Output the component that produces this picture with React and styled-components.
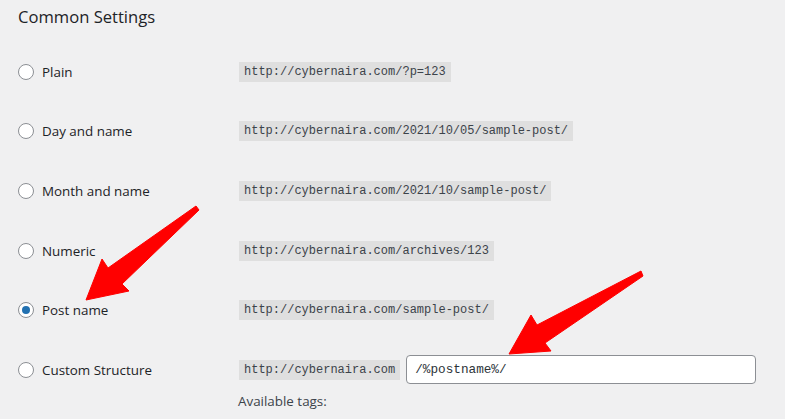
import React from "react"
import styled, { createGlobalStyle } from "styled-components"

const GlobalStyle = createGlobalStyle`
  html, body {
    margin: 0;
    padding: 0;
    background: #f0f0f1;
  }
  body {
    font-family: "Open Sans", "Liberation Sans", sans-serif;
    color: #1d2327;
  }
`

const Page = styled.div`
  position: relative;
  width: 785px;
  height: 419px;
  overflow: hidden;
  padding: 0 18px;
  box-sizing: border-box;
`

const Title = styled.h2`
  margin: 0;
  height: 34px;
  line-height: 34px;
  font-size: 16.6px;
  font-weight: 500;
  color: #1d2327;
`

const List = styled.div`
  margin-top: 8px;
`

const Row = styled.div`
  display: grid;
  grid-template-columns: 221px 1fr;
  padding: 15px 0;
  height: ${(p) => (p.$last ? "auto" : "29.6px")};
`

const Choice = styled.label`
  display: flex;
  align-items: center;
  gap: 8px;
  height: 29.6px;
  font-size: 13.4px;
  font-weight: 500;
  color: #1d2327;
`

const Radio = styled.span`
  width: 16px;
  height: 16px;
  box-sizing: border-box;
  border: 1px solid #8c8f94;
  border-radius: 50%;
  background: #fff;
  display: flex;
  align-items: center;
  justify-content: center;

  &::after {
    content: "";
    width: 8px;
    height: 8px;
    border-radius: 50%;
    background: ${(p) => (p.$checked ? "#2271b1" : "transparent")};
  }
`

const Value = styled.div`
  display: flex;
  flex-direction: column;
`

const Line = styled.div`
  display: flex;
  align-items: center;
  gap: 6px;
  height: 29.6px;
`

const Code = styled.code`
  font-family: "Liberation Mono", "DejaVu Sans Mono", monospace;
  font-size: 12px;
  line-height: 20px;
  padding: 0 5px;
  background: #dfdfdf;
  color: #3c434a;
  white-space: nowrap;
`

const Input = styled.div`
  width: 350px;
  height: 29px;
  box-sizing: border-box;
  border: 1px solid #8c8f94;
  border-radius: 4px;
  background: #fff;
  padding: 0 8px;
  display: flex;
  align-items: center;
  font-family: "Liberation Mono", "DejaVu Sans Mono", monospace;
  font-size: 12.7px;
  color: #2c3338;
`

const Note = styled.p`
  margin: 6px 0 0 -1px;
  font-size: 13.4px;
  line-height: 20px;
  color: #3c434a;
`

const Arrows = styled.svg`
  position: absolute;
  left: 0;
  top: 0;
  pointer-events: none;
`

const rows = [
  { label: "Plain", url: "http://cybernaira.com/?p=123" },
  { label: "Day and name", url: "http://cybernaira.com/2021/10/05/sample-post/" },
  { label: "Month and name", url: "http://cybernaira.com/2021/10/sample-post/" },
  { label: "Numeric", url: "http://cybernaira.com/archives/123" },
  { label: "Post name", url: "http://cybernaira.com/sample-post/", checked: true },
]

export default function App() {
  return (
    <>
      <GlobalStyle />
      <Page>
        <Title>Common Settings</Title>
        <List>
          {rows.map((r) => (
            <Row key={r.label}>
              <Choice>
                <Radio $checked={r.checked} />
                {r.label}
              </Choice>
              <Value>
                <Line>
                  <Code>{r.url}</Code>
                </Line>
              </Value>
            </Row>
          ))}
          <Row $last>
            <Choice>
              <Radio />
              Custom Structure
            </Choice>
            <Value>
              <Line>
                <Code>http://cybernaira.com</Code>
                <Input>/%postname%/</Input>
              </Line>
              <Note>Available tags:</Note>
            </Value>
          </Row>
        </List>
        <Arrows width="785" height="419" viewBox="0 0 785 419">
          <polygon
            fill="#ff0000"
            strokeLinejoin="round"
            stroke="#ff0000"
            strokeWidth="1"
            points="196,206 108,268 102,259 86,300 129,291 122,284 199,210"
          />
          <polygon
            fill="#ff0000"
            strokeLinejoin="round"
            stroke="#ff0000"
            strokeWidth="1"
            points="641,271 537,325 531,315 509,354 551,351 545,343 643,276"
          />
        </Arrows>
      </Page>
    </>
  )
}
